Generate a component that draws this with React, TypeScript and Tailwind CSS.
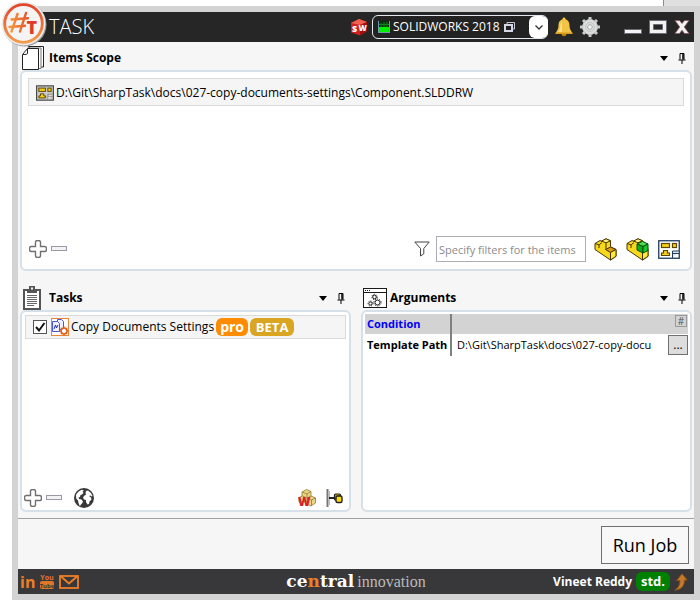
import React, { useState } from 'react';

type IconProps = { className?: string };

function LogoIcon({ className = '' }: IconProps) {
  return (
    <svg className={className} width="48" height="48" viewBox="0 0 48 48" aria-hidden="true">
      <defs>
        <linearGradient id="ring" x1="0" y1="0" x2="0" y2="1">
          <stop offset="0" stopColor="#e2452a" />
          <stop offset="1" stopColor="#f49a4a" />
        </linearGradient>
        <linearGradient id="hash" x1="0" y1="0" x2="1" y2="0">
          <stop offset="0" stopColor="#f4983a" />
          <stop offset="1" stopColor="#e8562c" />
        </linearGradient>
      </defs>
      <circle cx="24.500" cy="24.500" r="22" fill="#9a9a9a" />
      <circle cx="23.500" cy="23.500" r="22" fill="#ececec" />
      <circle cx="23.500" cy="23.500" r="18.800" fill="#f4f4f4" stroke="url(#ring)" strokeWidth="2.800" />
      <g stroke="url(#hash)" strokeWidth="2.400" fill="none" strokeLinecap="round">
        <path d="M17.500 14 11.500 31.500M26 13 20 31.500" />
        <path d="M11.500 19.500 28 18.200M9.500 27 25 25.800" />
      </g>
      <text x="26.500" y="34" fontFamily="Open Sans, sans-serif" fontWeight="800" fontSize="18" fill="#e03c25">T</text>
    </svg>
  );
}

function SwIcon() {
  return (
    <svg width="18" height="18" viewBox="0 0 18 18" aria-hidden="true">
      <path d="M1 5 9 1l8 3v9l-7 4.500-9-3z" fill="#d3201f" />
      <path d="M1 5 9 1l8 3-7 3z" fill="#f0604e" />
      <path d="M10 7 17 4v9l-7 4.500z" fill="#a31010" />
      <text x="2" y="14" fontFamily="Open Sans, sans-serif" fontWeight="800" fontSize="9" fill="#fff">S</text>
      <text x="8.500" y="13" fontFamily="Open Sans, sans-serif" fontWeight="800" fontSize="8" fill="#fff">W</text>
    </svg>
  );
}

function MonitorIcon({ className = '' }: IconProps) {
  return (
    <svg className={className} width="12" height="12" viewBox="0 0 12 12" aria-hidden="true">
      <rect width="12" height="12" fill="#6c9bb0" />
      <rect x="1" y="0" width="10" height="11" fill="#0a2a0a" />
      <path d="M1 6h10v5H1z" fill="#00f000" />
      <path d="M3 2v4M6 1v5M9 1v5M1 3.500h10" stroke="#0b8a1c" />
    </svg>
  );
}

function WindowsIcon({ className = '' }: IconProps) {
  return (
    <svg className={className} width="11" height="10" viewBox="0 0 11 10" aria-hidden="true">
      <path d="M3 2V.5h7.500V7H9" fill="none" stroke="#c4c8d4" />
      <rect x="1" y="3" width="7" height="6" fill="#222" stroke="#d4d8e6" strokeWidth="2" />
    </svg>
  );
}

function BellIcon() {
  return (
    <svg width="18" height="20" viewBox="0 0 18 20" aria-hidden="true">
      <ellipse cx="9" cy="17" rx="2.500" ry="2.300" fill="#b8860b" />
      <path d="M9 .5c1 0 1.500.7 1.500 1.700C14 3.500 14.500 6 14.500 9c0 3 1.500 4.500 3 7.500H.5C2 13.500 3.500 12 3.500 9c0-3 .5-5.500 4-6.800C7.500 1.200 8 .5 9 .5z" fill="#f3c443" />
      <path d="M7 4C5.500 5.500 5.500 8 5.300 10 5 12.500 4 14 3 15h4z" fill="#fde08a" />
      <path d="M.5 15.500h17v1.500H.5z" fill="#d99d22" />
    </svg>
  );
}

function GearIcon() {
  return (
    <svg width="20" height="20" viewBox="0 0 20 20" aria-hidden="true">
      <g stroke="#c9cbcc" strokeWidth="3">
        <path d="M10 0v20M0 10h20M3 3l14 14M17 3 3 17" />
      </g>
      <circle cx="10" cy="10" r="7.500" fill="#dcdddd" stroke="#c4c6c6" />
      <circle cx="10" cy="10" r="4.500" fill="none" stroke="#c2c4c5" />
      <circle cx="10" cy="10" r="2.300" fill="#f4f4f4" stroke="#a8abac" />
    </svg>
  );
}

function MinimizeIcon() {
  return (
    <svg width="18" height="16" viewBox="0 0 18 16" aria-hidden="true">
      <rect x=".5" y="10.500" width="17" height="4" fill="#f4f4f4" stroke="#6b6b78" />
    </svg>
  );
}

function MaximizeIcon() {
  return (
    <svg width="18" height="14" viewBox="0 0 18 14" aria-hidden="true">
      <path fillRule="evenodd" d="M.5.500h17v13H.5zM4.500 4.500v5h9v-5z" fill="#f2f2f2" stroke="#6b6b78" />
    </svg>
  );
}

function CloseIcon() {
  return (
    <svg width="16" height="14" viewBox="0 0 16 14" aria-hidden="true">
      <path d="M1 .5h4.500L8 3.500 10.500.5H15L10.300 7l4.700 6.500h-4.500L8 10.300 5.500 13.500H1L5.700 7z" fill="#f2f2f2" stroke="#8a5560" strokeWidth=".8" />
    </svg>
  );
}

function PagesIcon() {
  return (
    <svg width="22" height="24" viewBox="0 0 22 24" aria-hidden="true" fill="#fff" stroke="#222">
      <path d="M6.500.5h15v20.500h-3z" />
      <path d="M5.500 2h13.500v20.500H6z" stroke="#777" />
      <path d="M.5 23.500V8.500l5-6h11v21z" />
      <path d="M1 8.500c3 0 4.500 0 4.500-1.500V3" fill="none" />
    </svg>
  );
}

function ClipboardIcon() {
  return (
    <svg width="20" height="24" viewBox="-1 0 20 24" aria-hidden="true">
      <rect x="1" y="4" width="16" height="19" fill="#fff" stroke="#555" strokeWidth="2" />
      <path d="M4 3h2V0h6v3h2v4H4z" fill="#555" />
      <rect x="8" y="1.500" width="2" height="2" fill="#f6f6f6" />
      <path d="M4 9.500h10M4 11.500h10M4 13.500h10M4 15.500h10M4 17.500h10M4 19.500h7" stroke="#666" />
    </svg>
  );
}

function ArgumentsIcon() {
  return (
    <svg width="24" height="20" viewBox="0 0 24 20" aria-hidden="true" fill="none" stroke="#1a1a1a">
      <rect x=".5" y=".5" width="23" height="19" fill="#fff" />
      <path d="M1 4.500h22" />
      <path d="M2 2.500h1M4 2.500h1M6 2.500h1" />
      <circle cx="11.500" cy="9" r="1.800" />
      <circle cx="7.500" cy="15.500" r="1.600" />
      <circle cx="14.500" cy="14.500" r="2.500" />
      <g strokeDasharray="1 1.300">
        <circle cx="11.500" cy="9" r="2.700" />
        <circle cx="7.500" cy="15.500" r="2.500" />
        <circle cx="14.500" cy="14.500" r="3.600" />
      </g>
    </svg>
  );
}

function DrawingIcon({ small = false }: { small?: boolean }) {
  return (
    <svg width={small ? 18 : 22} height={small ? 16 : 19} viewBox="0 0 22 19" aria-hidden="true">
      <rect x=".75" y=".75" width="20.500" height="17.500" fill={small ? '#c9c9c9' : '#fff'} stroke={small ? '#3c3c3c' : '#1f3a5f'} strokeWidth="1.300" />
      <g fill="#f7d117" stroke="#5c4500" strokeWidth="1.200">
        <rect x="3.500" y="3.500" width="8" height="4" />
        <rect x="14.500" y="3.500" width="4" height="4" />
        <path d="M5.500 10.500h4v2.500h2v2.500h-8V13h2z" />
      </g>
      <path d="M14.500 18v-7H21M14.500 13.500H21" fill={small ? '#eee' : '#dfe8f2'} stroke={small ? '#777' : '#1f3a5f'} />
    </svg>
  );
}

function PartIcon() {
  return (
    <svg width="23" height="23" viewBox="0 0 23 23" aria-hidden="true" stroke="#4a3500" strokeLinejoin="round">
      <path d="M1 5.500 6 2.500l2 1L12 .8l4.500 2v6L22 11.500v6.800L16.500 22 1 11.500z" fill="#f8d81c" />
      <path d="M11.500 11.500 16.500 9l5.500 2.500-5.500 3z" fill="#d89a10" />
      <path d="M16.500 14.500V22l5.500-3.700v-6.800z" fill="#ffe93a" />
      <path d="M7.500 3 12 .8l4.500 2L12 4.800z" fill="#fff07a" />
      <path d="M1 5.500 5 7l3-2.500M12 4.800v6.500M5 7v3" fill="none" />
    </svg>
  );
}

function AssemblyIcon() {
  return (
    <svg width="23" height="23" viewBox="0 0 23 23" aria-hidden="true" stroke="#4a3500" strokeLinejoin="round">
      <path d="M1 5.500 6 2.500l2 1L12 .8l4.500 2L22 11v7.300L16.500 22 1 11.500z" fill="#f8d81c" />
      <path d="M16.500 14v8l5.500-3.700V12z" fill="#ffe93a" />
      <path d="M7.500 3 12 .8l4.500 2L12 4.800z" fill="#fff07a" />
      <path d="M1 5.500 5 7l3-2.500M5 7v3" fill="none" />
      <g stroke="#064d0c">
        <path d="m11 6 5.500-2.700L22 6l-5 2.500z" fill="#4be04f" />
        <path d="m11 6 6 2.500V15l-6-3z" fill="#0fae1c" />
        <path d="M17 8.500 22 6v6.500L17 15z" fill="#16c926" />
      </g>
    </svg>
  );
}

function FilterIcon() {
  return (
    <svg width="16" height="16" viewBox="0 0 16 16" aria-hidden="true">
      <path d="M.8 1h14.400L9.800 7.500v5.300L6.500 15V7.500z" fill="#fff" stroke="#444" />
    </svg>
  );
}

function PlusIcon() {
  return (
    <svg width="18" height="18" viewBox="0 0 18 18" aria-hidden="true">
      <path d="M6.500 2q0-1.500 2.500-1.500T11.500 2v4.500H16q1.500 0 1.500 2.500T16 11.500h-4.500V16q0 1.500-2.500 1.500T6.500 16v-4.500H2Q.5 11.500.5 9T2 6.500h4.500z" fill="#fff" stroke="#707070" strokeWidth="1.400" />
    </svg>
  );
}

function MinusIcon() {
  return (
    <svg width="16" height="18" viewBox="0 0 16 18" aria-hidden="true">
      <rect x=".5" y="6.500" width="15" height="4" fill="#f3f3f6" stroke="#9a9aa6" />
    </svg>
  );
}

function GlobeIcon() {
  return (
    <svg width="20" height="20" viewBox="0 0 20 20" aria-hidden="true">
      <circle cx="10" cy="10" r="10" fill="#383838" />
      <g fill="#fff">
        <path d="M2 7C3 4.500 5.500 2.300 8 1.700l2 .8-1.500 1L9.500 5 8 6.500 6.500 7 6 9l-1.500.5.500 1.500 2.500.5 1.500 2-1 2-1.500 1.500-.5 1.500L4.500 15 4 12.500 2.200 10.500z" />
        <path d="m12 3 2-.5 3 2.500 1.500 3-1 .5-1-1L15 8l2 1.500.5 2-2 2-.5 2.500-1.500.5-1.500-2.500V12l-2-.5-1-2 1.500-2 1.500-.8L11.500 5z" />
      </g>
    </svg>
  );
}

function TaskIcon() {
  return (
    <svg width="18" height="18" viewBox="0 0 18 18" aria-hidden="true">
      <rect x=".5" y=".5" width="17" height="17" fill="#fff" stroke="#ef8236" />
      <g fill="#eef0ff" stroke="#4a55cf">
        <path d="M6.500 1.500h4l2 2v8h-6z" />
        <path d="M1.500 3.500h5l2 2v8h-7z" />
      </g>
      <path d="m3 11 1.500-4 1 3 1.500-3" stroke="#27309c" fill="none" />
      <circle cx="13" cy="13" r="3" fill="#fff" stroke="#e5601c" strokeWidth="1.500" />
      <path d="M13 8.500v2M13 15.500v2M8.500 13h2M15.500 13h2M10 10l1.500 1.500M14.500 14.500 16 16M16 10l-1.500 1.500M10 16l1.500-1.500" stroke="#e5601c" strokeWidth="1.300" />
    </svg>
  );
}

function CubesIcon() {
  return (
    <svg className="overflow-visible" width="18" height="18" viewBox="0 0 18 18" aria-hidden="true">
      <g fill="#ecd682" stroke="#8f7838" strokeWidth=".8" strokeLinejoin="round">
        <path d="m4 3 4.500-2.500L13 2.500V8l-4 2.500L4 8z" />
        <path d="M4 3l5 2 4-2.500M9 5v5" fill="none" />
        <path d="m9 9 4-2 4.500 2v5L13 17l-4-2z" />
        <path d="m9 9 4.500 2 4-2M13.500 11v6" fill="none" />
        <path d="M1 8.500 4.500 7 9 9v4H1z" />
      </g>
      <text x="0" y="17" fontFamily="Open Sans, sans-serif" fontWeight="800" fontSize="12" fill="#d8202a">W</text>
    </svg>
  );
}

function ConnectorIcon() {
  return (
    <svg width="17" height="18" viewBox="0 0 17 18" aria-hidden="true">
      <path d="M1.500 0v18" stroke="#777" strokeWidth="2" />
      <path d="M3.500 2v14" stroke="#bbb" />
      <path d="M3 9h6" stroke="#222" strokeWidth="2" />
      <rect x="8.500" y="5" width="6" height="6" rx="1" fill="#c8a800" stroke="#222" strokeWidth="1.200" />
      <rect x="10" y="7" width="6" height="6.500" rx="1.500" fill="#ffd912" stroke="#222" strokeWidth="1.400" />
    </svg>
  );
}

function YouTubeIcon() {
  return (
    <svg className="overflow-visible" width="14" height="17" viewBox="0 0 14 17" aria-hidden="true">
      <text x="7" y="7" textAnchor="middle" fontFamily="Open Sans, sans-serif" fontWeight="700" fontSize="7" fill="#e0762a">You</text>
      <rect x="0" y="8" width="14" height="8" rx="2" fill="#e0762a" />
      <text x="7" y="14.500" textAnchor="middle" fontFamily="Open Sans, sans-serif" fontWeight="700" fontSize="6" fill="#38383a">Tube</text>
    </svg>
  );
}

function MailIcon() {
  return (
    <svg width="20" height="14" viewBox="0 0 20 14" aria-hidden="true" fill="none" stroke="#ee7f26" strokeWidth="1.800">
      <rect x="1" y="1" width="18" height="12" />
      <path d="m2 1.500 8 7 8-7" />
    </svg>
  );
}

function UpgradeIcon() {
  return (
    <svg width="14" height="18" viewBox="0 0 14 18" aria-hidden="true">
      <path d="M8 .8 13.300 7l-3 .2c.4 5-2.300 9.300-9.500 10C4.500 14.500 6 12 5.800 7.500L2.500 7.700z" fill="#c47a2c" stroke="#8a4f16" />
    </svg>
  );
}

function PinIcon() {
  return (
    <svg width="8" height="11" viewBox="0 0 8 11" aria-hidden="true">
      <path d="M2 6.500V.5h4v6M.5 7h7M4 7v4" fill="none" stroke="#000" />
      <path d="M5 .5v6" stroke="#000" strokeWidth="1.500" />
    </svg>
  );
}

function PanelHeader({ title, icon }: { title: string; icon: React.ReactNode }) {
  return (
    <header className="flex h-7 items-center pl-0.5 pr-1.5 pt-1">
      <span className="flex w-6 justify-start">{icon}</span>
      <h2 className="ml-[3px] flex-1 text-xs font-bold">{title}</h2>
      <button type="button" aria-label={title + ' menu'} className="mr-2.5">
        <svg width="8" height="5" viewBox="0 0 8 5" aria-hidden="true">
          <path d="M0 0h8L4 5z" />
        </svg>
      </button>
      <button type="button" aria-label={'Pin ' + title}>
        <PinIcon />
      </button>
    </header>
  );
}

export default function App() {
  const [checked, setChecked] = useState(true);
  const [filter, setFilter] = useState('');
  const [path, setPath] = useState('D:\\Git\\SharpTask\\docs\\027-copy-docu');

  return (
    <div className="relative flex min-h-screen flex-col bg-white pl-3 font-['Open_Sans','Noto_Sans',sans-serif] text-xs text-black">
      <div className="flex h-1.5 justify-end">
        <span className="w-[37px] border-l border-[#8c8c8c] bg-[#e0e0e0]" />
      </div>
      <LogoIcon className="absolute left-0 top-0" />
      <div className="flex flex-1 flex-col border-6 border-[#d3d3d3] bg-[#f6f6f6]">
        <header className="flex h-[30px] items-center bg-[#262626] pl-[31px] pr-1 text-white">
          <h1 className="flex-1 text-xl font-light">TASK</h1>
          <SwIcon />
          <div className="relative ml-1 flex items-center">
            <select aria-label="Application" className="h-6 w-44 appearance-none rounded-md border border-[#e4e8f0] bg-[#222222] pl-5 text-xs text-white">
              <option>SOLIDWORKS 2018</option>
            </select>
            <MonitorIcon className="pointer-events-none absolute left-1.5" />
            <WindowsIcon className="pointer-events-none absolute left-[132px]" />
            <span className="pointer-events-none absolute right-0 flex h-[22px] w-[19px] items-center justify-center rounded-md bg-white">
              <svg width="8" height="5" viewBox="0 0 8 5" fill="none" stroke="#333" strokeWidth="1.300" aria-hidden="true">
                <path d="m.5.500 3.500 3.500 3.500-3.500" />
              </svg>
            </span>
          </div>
          <button type="button" aria-label="Notifications" className="ml-[7px]"><BellIcon /></button>
          <button type="button" aria-label="Settings" className="ml-[7px]"><GearIcon /></button>
          <button type="button" aria-label="Minimize" className="ml-6"><MinimizeIcon /></button>
          <button type="button" aria-label="Maximize" className="ml-[7px]"><MaximizeIcon /></button>
          <button type="button" aria-label="Close" className="ml-[7px]"><CloseIcon /></button>
        </header>

        <main className="flex flex-1 flex-col px-0.5 pb-1.5">
          <section className="flex flex-auto flex-col">
            <PanelHeader title="Items Scope" icon={<PagesIcon />} />
            <div className="flex min-h-[201px] flex-1 flex-col rounded-md border-2 border-[#d6e0e8] bg-white">
              <ul className="flex-1 px-1.5 pt-1.5">
                <li className="flex h-7 items-center gap-0.5 border border-[#dadada] bg-[#f5f5f5] pl-[7px] pt-0.5">
                  <DrawingIcon small />
                  D:\Git\SharpTask\docs\027-copy-documents-settings\Component.SLDDRW
                </li>
              </ul>
              <div className="flex items-center pb-[7px] pl-[7px] pr-[9px]">
                <button type="button" aria-label="Add item"><PlusIcon /></button>
                <button type="button" aria-label="Remove item" className="ml-1"><MinusIcon /></button>
                <label htmlFor="filter" className="ml-auto mr-1.5" aria-label="Filter"><FilterIcon /></label>
                <input
                  id="filter"
                  className="h-[26px] w-[150px] border border-[#abadb3] bg-white pl-0.5 text-[11px] placeholder:text-[#8c8c8c]"
                  placeholder="Specify filters for the items"
                  value={filter}
                  onChange={(e) => setFilter(e.target.value)}
                />
                <button type="button" aria-label="Parts" className="ml-2"><PartIcon /></button>
                <button type="button" aria-label="Assemblies" className="ml-[9px]"><AssemblyIcon /></button>
                <button type="button" aria-label="Drawings" className="ml-[9px] mr-px"><DrawingIcon /></button>
              </div>
            </div>
          </section>

          <div className="grid flex-auto grid-cols-2 gap-2.5 pt-[11px]">
            <section className="flex flex-col">
              <PanelHeader title="Tasks" icon={<ClipboardIcon />} />
              <div className="flex min-h-[202px] flex-1 flex-col rounded-md border-2 border-[#d6e0e8] bg-white">
                <ul className="flex-1 px-[3px] pt-[3px]">
                  <li className="flex h-6 items-center border border-[#dadada] bg-[#f5f5f5] pl-[7px]">
                    <label className="flex items-center">
                      <span className="relative flex">
                        <input
                          type="checkbox"
                          checked={checked}
                          onChange={() => setChecked(!checked)}
                          className="size-3.5 appearance-none border border-[#555555] bg-white"
                        />
                        {checked && (
                          <svg className="pointer-events-none absolute inset-0" width="14" height="14" viewBox="0 0 14 14" fill="none" stroke="#111" strokeWidth="2" aria-hidden="true">
                            <path d="m3 7 3 3.500L11.500 3" />
                          </svg>
                        )}
                      </span>
                      <span className="ml-1 mr-0.5"><TaskIcon /></span>
                      Copy Documents Settings
                    </label>
                    <span className="ml-0.5 h-[18px] w-8 rounded-md bg-[#ff8c00] text-center text-sm/[18px] font-bold text-white">pro</span>
                    <span className="ml-0.5 h-[18px] w-11 rounded-md bg-[#daa520] text-center text-[13px]/[18px] font-bold text-white">BETA</span>
                  </li>
                </ul>
                <div className="flex items-center px-0.5 pb-0.5">
                  <button type="button" aria-label="Add task"><PlusIcon /></button>
                  <button type="button" aria-label="Remove task" className="ml-1"><MinusIcon /></button>
                  <button type="button" aria-label="Browse online tasks" className="ml-3"><GlobeIcon /></button>
                  <button type="button" aria-label="Macros" className="ml-auto"><CubesIcon /></button>
                  <button type="button" aria-label="Connections" className="ml-2.5 mr-1"><ConnectorIcon /></button>
                </div>
              </div>
            </section>

            <section className="flex flex-col">
              <PanelHeader title="Arguments" icon={<ArgumentsIcon />} />
              <div className="flex min-h-[202px] flex-1 flex-col rounded-md border-2 border-[#d6e0e8] bg-white px-0.5 pt-0.5">
                <table className="w-full table-fixed border-collapse text-[11px]">
                  <tbody>
                    <tr className="h-5 bg-[#d3d3d3]">
                      <th scope="row" className="w-[86px] border-r-2 border-[#808080] p-0 pl-0.5 text-left font-bold text-[#0000ff]">Condition</th>
                      <td className="p-0 pr-px align-top">
                        <button type="button" aria-label="Expression" className="ml-auto mt-px block size-3 border border-[#999999] text-center text-[10px]/[10px] text-[#555555]">#</button>
                      </td>
                    </tr>
                    <tr className="h-[22px]">
                      <th scope="row" className="border-r-2 border-[#808080] p-0 pl-0.5 text-left font-bold whitespace-nowrap">
                        <label htmlFor="template">Template Path</label>
                      </th>
                      <td className="p-0">
                        <div className="flex items-center">
                          <input
                            id="template"
                            className="min-w-0 flex-1 bg-white pl-[5px]"
                            value={path}
                            onChange={(e) => setPath(e.target.value)}
                          />
                          <button type="button" aria-label="Browse" className="ml-1 h-5 w-5 border border-[#707070] bg-[#dddddd] text-xs/4">...</button>
                        </div>
                      </td>
                    </tr>
                  </tbody>
                </table>
              </div>
            </section>
          </div>
        </main>

        <div className="flex h-[51px] items-center justify-end border-t border-[#a0a0a0] pr-[5px] pt-0.5">
          <button type="button" className="h-[38px] w-22 border border-[#707070] bg-[#f8f8f8] text-lg">Run Job</button>
        </div>

        <footer className="flex h-[25px] items-center bg-[#38383a] px-0.5 text-white">
          <div className="flex flex-1 items-center gap-[5px]">
            <a href="#linkedin" className="flex" aria-label="LinkedIn">
              <svg className="overflow-visible" width="15" height="16" viewBox="0 0 15 16" aria-hidden="true">
                <text x="0" y="14" fontFamily="Open Sans, sans-serif" fontWeight="700" fontSize="16" fill="#ee7f26">in</text>
              </svg>
            </a>
            <a href="#youtube" aria-label="YouTube"><YouTubeIcon /></a>
            <a href="#mail" aria-label="Email"><MailIcon /></a>
          </div>
          <a href="#central" className="flex items-baseline gap-[3px]">
            <span className="font-['DejaVu_Serif',serif] text-[17px]/5 font-bold">ce<span className="text-[#ee7f26]">n</span>tral</span>
            <span className="font-['Liberation_Serif',serif] text-base/5 text-[#bbbbbb]">innovation</span>
          </a>
          <div className="flex flex-1 items-center justify-end">
            <span className="font-bold">Vineet Reddy</span>
            <span className="ml-1 h-[19px] w-[34px] rounded-md bg-[#008000] text-center text-[13px]/[19px] font-bold">std.</span>
            <a href="#upgrade" className="ml-1 mr-1" aria-label="Upgrade"><UpgradeIcon /></a>
          </div>
        </footer>
      </div>
    </div>
  );
}
